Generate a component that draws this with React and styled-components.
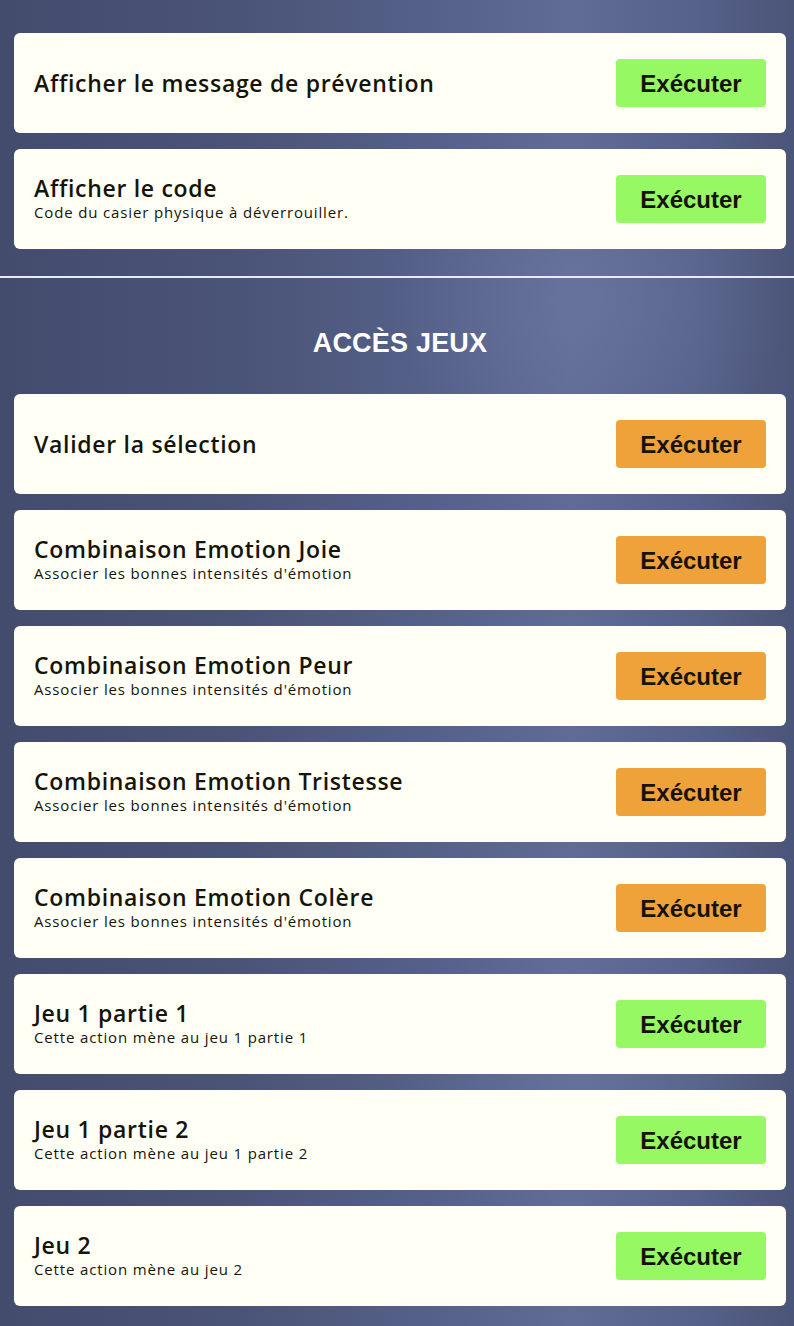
import React from "react";
import styled, { createGlobalStyle } from "styled-components";

const Global = createGlobalStyle`
  html, body { margin: 0; padding: 0; }
  body {
    font-family: "Open Sans", "Liberation Sans", sans-serif;
    min-height: 1326px;
    background:
      radial-gradient(ellipse 200px 160px at 590px 300px, rgba(112,124,162,0.45), rgba(112,124,162,0) 100%),
      radial-gradient(ellipse 200px 160px at 590px 1080px, rgba(112,124,162,0.35), rgba(112,124,162,0) 100%),
      linear-gradient(90deg, #434c6d 0%, #4a5477 30%, #56618a 55%, #606c96 72%, #56618a 88%, #4b5578 100%);
  }
`;

const Page = styled.main`
  padding: 33px 8px 20px 14px;
  display: flex;
  flex-direction: column;
`;

const Section = styled.section`
  display: flex;
  flex-direction: column;
  gap: 16px;
`;

const Divider = styled.hr`
  margin: 27px -8px 0 -14px;
  border: none;
  height: 2px;
  background: #e8eaf0;
`;

const Heading = styled.h2`
  margin: 0;
  box-sizing: border-box;
  height: 116px;
  padding-top: 14px;
  display: flex;
  align-items: center;
  justify-content: center;
  color: #ffffff;
  font-family: "Liberation Sans", Arial, sans-serif;
  font-weight: 700;
  font-size: 27px;
  letter-spacing: 0.2px;
`;

const Card = styled.div`
  height: 100px;
  box-sizing: border-box;
  background: #fffff5;
  border-radius: 6px;
  padding: 0 20px;
  display: flex;
  align-items: center;
  justify-content: space-between;
`;

const Text = styled.div`
  display: flex;
  flex-direction: column;
`;

const Title = styled.div`
  font-family: "Open Sans", sans-serif;
  font-weight: 600;
  font-size: 23px;
  line-height: 26px;
  color: #16140a;
  letter-spacing: 0.7px;
`;

const Sub = styled.div`
  font-family: "Open Sans", sans-serif;
  font-weight: 500;
  font-size: 15px;
  line-height: 22px;
  color: #16140a;
  letter-spacing: 0.85px;
`;

const Button = styled.button`
  width: 150px;
  height: 48px;
  border: none;
  border-radius: 4px;
  background: ${(p) => (p.$tone === "orange" ? "#efa23a" : "#96f863")};
  color: #16140a;
  font-family: "Liberation Sans", Arial, sans-serif;
  font-weight: 700;
  font-size: 24px;
  padding: 2px 0 0;
  cursor: pointer;
`;

const top = [
  { title: "Afficher le message de prévention", tone: "green" },
  { title: "Afficher le code", sub: "Code du casier physique à déverrouiller.", tone: "green" },
];

const games = [
  { title: "Valider la sélection", tone: "orange" },
  { title: "Combinaison Emotion Joie", sub: "Associer les bonnes intensités d'émotion", tone: "orange" },
  { title: "Combinaison Emotion Peur", sub: "Associer les bonnes intensités d'émotion", tone: "orange" },
  { title: "Combinaison Emotion Tristesse", sub: "Associer les bonnes intensités d'émotion", tone: "orange" },
  { title: "Combinaison Emotion Colère", sub: "Associer les bonnes intensités d'émotion", tone: "orange" },
  { title: "Jeu 1 partie 1", sub: "Cette action mène au jeu 1 partie 1", tone: "green" },
  { title: "Jeu 1 partie 2", sub: "Cette action mène au jeu 1 partie 2", tone: "green" },
  { title: "Jeu 2", sub: "Cette action mène au jeu 2", tone: "green" },
];

function ActionCard({ title, sub, tone }) {
  return (
    <Card>
      <Text>
        <Title>{title}</Title>
        {sub && <Sub>{sub}</Sub>}
      </Text>
      <Button $tone={tone}>Exécuter</Button>
    </Card>
  );
}

export default function App() {
  return (
    <>
      <Global />
      <Page>
        <Section>
          {top.map((a) => (
            <ActionCard key={a.title} {...a} />
          ))}
        </Section>
        <Divider />
        <Heading>ACCÈS JEUX</Heading>
        <Section>
          {games.map((a) => (
            <ActionCard key={a.title} {...a} />
          ))}
        </Section>
      </Page>
    </>
  );
}
